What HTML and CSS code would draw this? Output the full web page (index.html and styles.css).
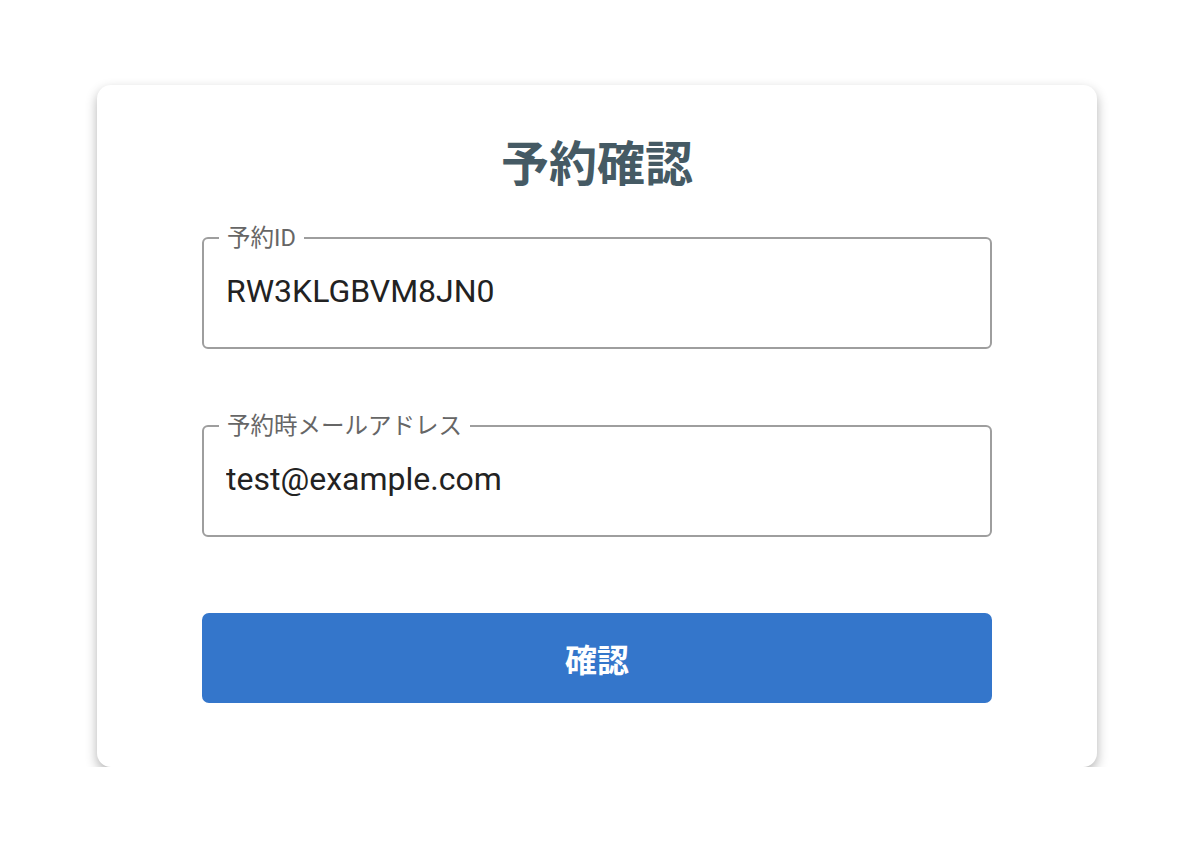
FILE: index.html
```html
<!DOCTYPE html>
<html lang="ja">
<head>
    <meta charset="UTF-8">
    <meta name="viewport" content="width=device-width, initial-scale=1.0">
    <title>予約確認</title>
    <link rel="stylesheet" href="styles.css">
</head>
<body>

    <div class="container">
        <form class="card" onsubmit="return false;">
            <h1 class="title">予約確認</h1>

            <fieldset class="field">
                <legend>予約ID</legend>
                <input type="text" id="reservationId" value="RW3KLGBVM8JN0">
            </fieldset>

            <fieldset class="field field-mail">
                <legend>予約時メールアドレス</legend>
                <input type="email" id="reservationMail" value="test@example.com">
            </fieldset>

            <button type="submit" class="submit">確認</button>
        </form>
    </div>

</body>
</html>
```

FILE: styles.css
```css
body {
    font-family: Roboto, "Noto Sans CJK JP", sans-serif;
    background-color: #ffffff;
    margin: 0;
    padding: 85px 7px 0 0;
}
.container {
    width: 1000px;
    margin: 0 auto;
}
.card {
    display: flex;
    flex-direction: column;
    background-color: white;
    border-radius: 14px;
    box-shadow: 0 5px 12px rgba(0, 0, 0, 0.3);
    padding: 47px 105px 64px;
}
.title {
    margin: 0 0 39px;
    font-family: "Noto Sans CJK JP", sans-serif;
    font-size: 48px;
    line-height: 56px;
    font-weight: bold;
    color: #455a64;
    text-align: center;
}
.field {
    margin: 0;
    padding: 0 0 15px;
    border: 2px solid #9e9e9e;
    border-radius: 6px;
}
.field legend {
    margin-left: 15px;
    padding: 0 8px;
    font-size: 23.5px;
    line-height: 22px;
    color: #666666;
}
.field input {
    display: block;
    box-sizing: border-box;
    width: 100%;
    height: 83px;
    padding: 0 22px;
    border: none;
    outline: none;
    background: transparent;
    font-family: Roboto, sans-serif;
    font-size: 32px;
    color: #222222;
}
.field-mail {
    margin-top: 66px; /* 入力欄の間隔 */
}
.submit {
    margin-top: 76px;
    height: 90px;
    background-color: #3476cb;
    color: white;
    border: none;
    border-radius: 7px;
    font-family: "Noto Sans CJK JP", sans-serif;
    font-size: 32px;
    font-weight: bold;
    cursor: pointer;
}
```
